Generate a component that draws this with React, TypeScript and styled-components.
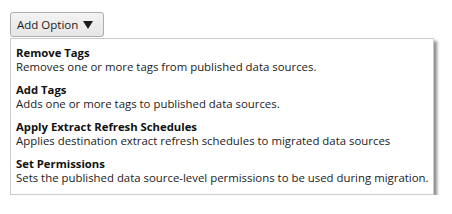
import styled, { createGlobalStyle } from "styled-components";

const GlobalStyle = createGlobalStyle`
  body {
    margin: 0;
    background: #ffffff;
    font-family: "Open Sans", "Noto Sans", sans-serif;
    color: #1b1b1b;
  }
`;

const options = [
  {
    title: "Remove Tags",
    description: "Removes one or more tags from published data sources.",
  },
  {
    title: "Add Tags",
    description: "Adds one or more tags to published data sources.",
  },
  {
    title: "Apply Extract Refresh Schedules",
    description: "Applies destination extract refresh schedules to migrated data sources",
  },
  {
    title: "Set Permissions",
    description: "Sets the published data source-level permissions to be used during migration.",
  },
];

const App = () => {
  return (
    <Wrapper>
      <GlobalStyle />
      <DropButton>
        Add Option
        <Arrow viewBox="0 0 10 8">
          <path d="M0 0 H10 L5 8 Z" fill="#1b1b1b" />
        </Arrow>
      </DropButton>
      <Menu>
        {options.map((option) => (
          <MenuItem key={option.title}>
            <ItemTitle>{option.title}</ItemTitle>
            <ItemDescription>{option.description}</ItemDescription>
          </MenuItem>
        ))}
      </Menu>
    </Wrapper>
  );
};

const Wrapper = styled.main`
  display: flex;
  flex-direction: column;
  align-items: flex-start;
  padding: 12px 0 0 10px;
`;

const DropButton = styled.button`
  display: flex;
  align-items: center;
  gap: 5px;
  box-sizing: border-box;
  width: 94px;
  height: 25px;
  padding: 0 0 0 6px;

  background: linear-gradient(#f3f3f3, #e6e6e6);
  border: 1px solid #adadad;
  border-radius: 3px;

  font-family: "Open Sans", "Noto Sans", sans-serif;
  font-size: 11.5px;
  color: #1b1b1b;
`;

const Arrow = styled.svg`
  width: 10px;
  height: 8px;
`;

const Menu = styled.ul`
  box-sizing: border-box;
  width: 424px;
  height: 157px;
  margin: 1px 0 0;
  padding: 3px 0 4px;
  list-style: none;

  background: #ffffff;
  border: 1px solid #cccccc;
  box-shadow: 3px 3px 3px rgba(0, 0, 0, 0.45);
`;

const MenuItem = styled.li`
  display: flex;
  flex-direction: column;
  padding: 4px 2px 5px 5px;
  line-height: 14px;
  white-space: nowrap;
`;

const ItemTitle = styled.span`
  font-size: 11.3px;
  font-weight: 700;
  color: #111111;
`;

const ItemDescription = styled.span`
  font-size: 11.4px;
  color: #222222;
`;

export default App;
